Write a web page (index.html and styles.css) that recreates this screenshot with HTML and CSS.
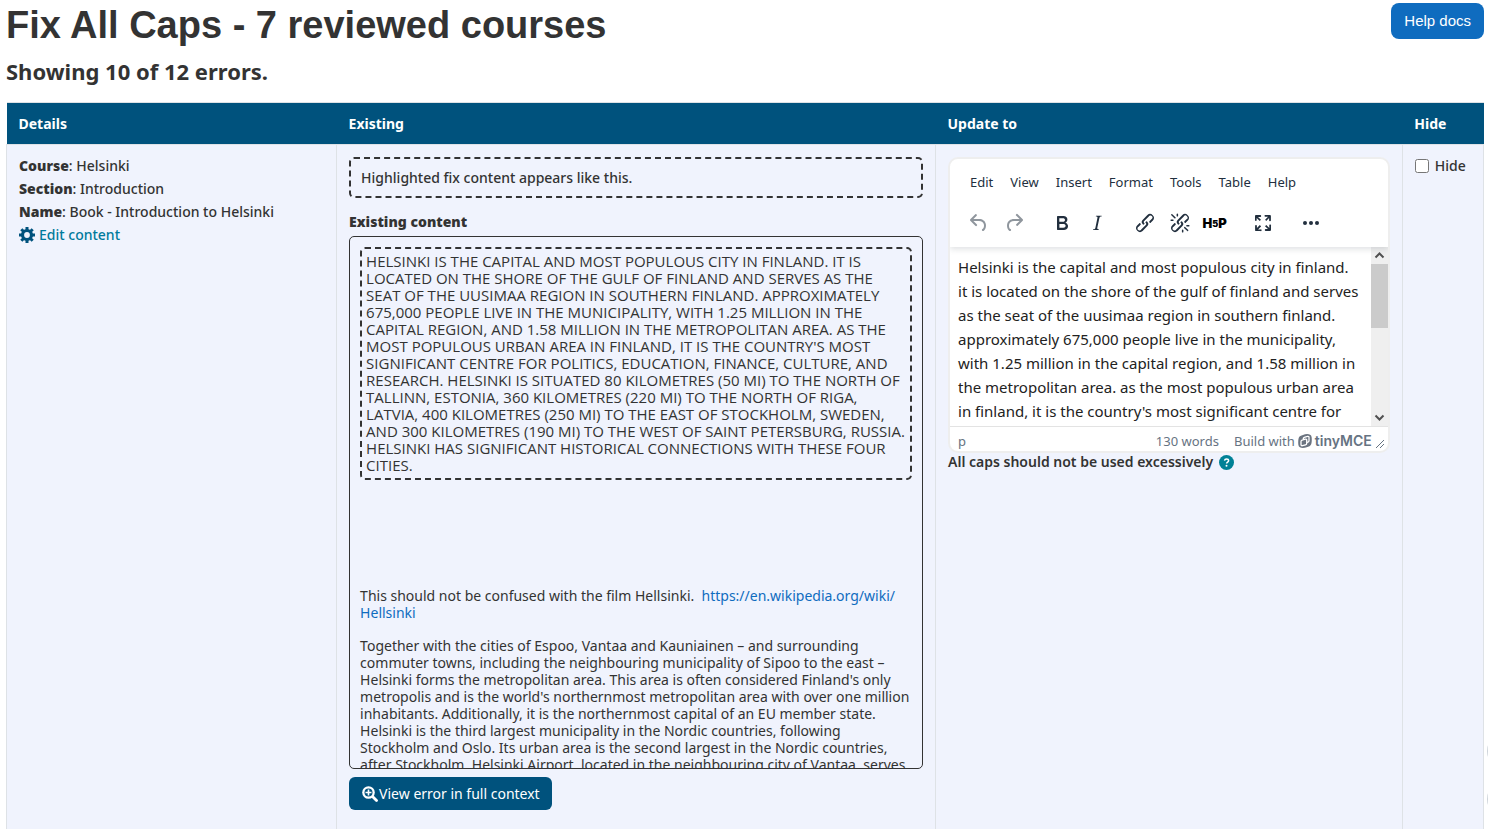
FILE: index.html
```html
<!DOCTYPE html>
<html lang="en">

<head>
  <meta charset="UTF-8">
  <meta name="viewport" content="width=device-width, initial-scale=1.0">
  <title>Fix All Caps</title>
  <link rel="stylesheet" href="styles.css">
</head>

<body>
  <header class="page-header">
    <h1>Fix All Caps - 7 reviewed courses</h1>
    <a href="#" class="btn-help">Help docs</a>
  </header>
  <h2>Showing 10 of 12 errors.</h2>

  <table class="errors">
    <colgroup>
      <col class="col-details">
      <col class="col-existing">
      <col class="col-update">
      <col class="col-hide">
    </colgroup>
    <thead>
      <tr>
        <th>Details</th>
        <th>Existing</th>
        <th>Update to</th>
        <th>Hide</th>
      </tr>
    </thead>
    <tbody>
      <tr>
        <td class="details">
          <div><strong>Course</strong>: Helsinki</div>
          <div><strong>Section</strong>: Introduction</div>
          <div><strong>Name</strong>: Book - Introduction to Helsinki</div>
          <a href="#" class="edit-link">
            <svg width="16" height="16" viewBox="0 0 16 16">
              <circle cx="8" cy="8" r="4.500" fill="none" stroke="#00527d" stroke-width="3.200" />
              <path d="M8 0v4M8 12v4M0 8h4M12 8h4M2.300 2.300l3 3M10.700 10.700l3 3M13.700 2.300l-3 3M5.300 10.700l-3 3" fill="none" stroke="#00527d" stroke-width="3" />
            </svg>
            <span>Edit content</span>
          </a>
        </td>
        <td>
          <div class="sample">Highlighted fix content appears like this.</div>
          <h3>Existing content</h3>
          <div class="existing">
            <p class="highlight">HELSINKI IS THE CAPITAL AND MOST POPULOUS CITY IN FINLAND. IT IS<br>
              LOCATED ON THE SHORE OF THE GULF OF FINLAND AND SERVES AS THE<br>
              SEAT OF THE UUSIMAA REGION IN SOUTHERN FINLAND. APPROXIMATELY<br>
              675,000 PEOPLE LIVE IN THE MUNICIPALITY, WITH 1.25 MILLION IN THE<br>
              CAPITAL REGION, AND 1.58 MILLION IN THE METROPOLITAN AREA. AS THE<br>
              MOST POPULOUS URBAN AREA IN FINLAND, IT IS THE COUNTRY'S MOST<br>
              SIGNIFICANT CENTRE FOR POLITICS, EDUCATION, FINANCE, CULTURE, AND<br>
              RESEARCH. HELSINKI IS SITUATED 80 KILOMETRES (50 MI) TO THE NORTH OF<br>
              TALLINN, ESTONIA, 360 KILOMETRES (220 MI) TO THE NORTH OF RIGA,<br>
              LATVIA, 400 KILOMETRES (250 MI) TO THE EAST OF STOCKHOLM, SWEDEN,<br>
              AND 300 KILOMETRES (190 MI) TO THE WEST OF SAINT PETERSBURG, RUSSIA.<br>
              HELSINKI HAS SIGNIFICANT HISTORICAL CONNECTIONS WITH THESE FOUR<br>
              CITIES.</p>
            <p>This should not be confused with the film Hellsinki.&nbsp; <a href="#">https://en.wikipedia.org/wiki/<br>Hellsinki</a></p>
            <p>Together with the cities of Espoo, Vantaa and Kauniainen – and surrounding<br>
              commuter towns, including the neighbouring municipality of Sipoo to the east –<br>
              Helsinki forms the metropolitan area. This area is often considered Finland's only<br>
              metropolis and is the world's northernmost metropolitan area with over one million<br>
              inhabitants. Additionally, it is the northernmost capital of an EU member state.<br>
              Helsinki is the third largest municipality in the Nordic countries, following<br>
              Stockholm and Oslo. Its urban area is the second largest in the Nordic countries,<br>
              after Stockholm. Helsinki Airport, located in the neighbouring city of Vantaa, serves</p>
          </div>
          <button type="button" class="btn-context">
            <svg width="16" height="16" viewBox="0 0 16 16">
              <circle cx="6.500" cy="6.500" r="6.300" fill="#fff" />
              <path d="M10.500 10.500L14.500 14.500" fill="none" stroke="#fff" stroke-width="2.800" stroke-linecap="round" />
              <circle cx="6.500" cy="6.500" r="4" fill="#00527d" />
              <path d="M6.500 3.500v6M3.500 6.500h6" fill="none" stroke="#fff" stroke-width="1.600" />
            </svg>
            <span>View error in full context</span>
          </button>
        </td>
        <td>
          <div class="editor">
            <div class="editor-head">
              <div class="menubar">
                <button type="button">Edit</button>
                <button type="button">View</button>
                <button type="button">Insert</button>
                <button type="button">Format</button>
                <button type="button">Tools</button>
                <button type="button">Table</button>
                <button type="button">Help</button>
              </div>
              <div class="toolbar">
                <div class="group">
                  <button type="button" aria-label="Undo" disabled>
                    <svg width="24" height="24" viewBox="0 0 24 24">
                      <path d="M6.4 8H12c3.7 0 6.2 2 6.8 5.1.6 2.7-.4 5.6-2.3 6.8a1 1 0 0 1-1-1.8c1.1-.6 1.8-2.7 1.4-4.6-.5-2.1-2.1-3.5-4.9-3.5H6.4l3.3 3.3a1 1 0 1 1-1.4 1.4l-5-5a1 1 0 0 1 0-1.4l5-5a1 1 0 0 1 1.4 1.4L6.4 8Z" />
                    </svg>
                  </button>
                  <button type="button" aria-label="Redo" disabled>
                    <svg width="24" height="24" viewBox="0 0 24 24">
                      <path d="M17.6 10H12c-2.8 0-4.4 1.4-4.9 3.5-.4 2 .3 4 1.4 4.6a1 1 0 1 1-1 1.8c-2-1.2-2.9-4.1-2.3-6.8.6-3 3-5.1 6.8-5.1h5.6l-3.3-3.3a1 1 0 1 1 1.4-1.4l5 5a1 1 0 0 1 0 1.4l-5 5a1 1 0 0 1-1.4-1.4l3.3-3.3Z" />
                    </svg>
                  </button>
                </div>
                <div class="group">
                  <button type="button" aria-label="Bold">
                    <svg width="24" height="24" viewBox="0 0 24 24">
                      <path fill-rule="evenodd" d="M7.8 19c-.3 0-.5 0-.6-.2l-.2-.5V5.7c0-.2 0-.4.2-.5l.6-.2h5c1.5 0 2.7.3 3.5 1 .7.6 1.1 1.4 1.1 2.5a3 3 0 0 1-.6 1.9c-.4.6-1 1-1.6 1.2.4.1.9.3 1.3.6s.8.7 1 1.2c.4.4.5 1 .5 1.6 0 1.3-.4 2.3-1.3 3-.8.7-2.1 1-3.8 1H7.8Zm5-8.3c.6 0 1.2-.1 1.6-.5.4-.3.6-.7.6-1.3 0-1.1-.8-1.7-2.3-1.7H9.3v3.5h3.4Zm.5 6c.7 0 1.3-.1 1.7-.4.4-.4.6-.9.6-1.5s-.2-1-.7-1.4c-.4-.3-1-.4-2-.4H9.4v3.8h4Z" />
                    </svg>
                  </button>
                  <button type="button" aria-label="Italic">
                    <svg width="24" height="24" viewBox="0 0 24 24">
                      <path d="m16.7 4.7-.1.9h-.3c-.6 0-1 0-1.4.3-.3.3-.4.6-.5 1.1l-2.1 9.8v.6c0 .5.4.8 1.4.8h.2l-.2.8H8l.2-.8h.2c1.1 0 1.8-.5 2-1.5l2-9.8.1-.5c0-.6-.4-.8-1.4-.8h-.3l.2-.9h5.8Z" />
                    </svg>
                  </button>
                </div>
                <div class="group">
                  <button type="button" aria-label="Link">
                    <svg width="24" height="24" viewBox="0 0 24 24">
                      <path d="M6.2 12.3a1 1 0 0 1 1.4 1.4l-2 2a2 2 0 1 0 2.6 2.8l4.8-4.8a1 1 0 0 0 0-1.4 1 1 0 1 1 1.4-1.3 2.9 2.9 0 0 1 0 4L9.6 20a3.9 3.9 0 0 1-5.5-5.5l2-2Zm11.6-.6a1 1 0 0 1-1.4-1.4l2-2a2 2 0 1 0-2.6-2.8L11 10.3a1 1 0 0 0 0 1.4A1 1 0 1 1 9.6 13a2.9 2.9 0 0 1 0-4L14.4 4a3.9 3.9 0 0 1 5.5 5.5l-2 2Z" />
                    </svg>
                  </button>
                  <button type="button" aria-label="Remove link">
                    <svg width="24" height="24" viewBox="0 0 24 24">
                      <path d="M6.2 12.3a1 1 0 0 1 1.4 1.4l-2 2a2 2 0 1 0 2.6 2.8l4.8-4.8a1 1 0 0 0 0-1.4 1 1 0 1 1 1.4-1.3 2.9 2.9 0 0 1 0 4L9.6 20a3.9 3.9 0 0 1-5.5-5.5l2-2Zm11.6-.6a1 1 0 0 1-1.4-1.4l2.1-2a2 2 0 1 0-2.7-2.8L11 10.3a1 1 0 0 0 0 1.4A1 1 0 1 1 9.6 13a2.9 2.9 0 0 1 0-4L14.4 4a3.9 3.9 0 0 1 5.5 5.5l-2 2ZM7.6 6.3a.8.8 0 0 1-1 1.1L3.3 4.2a.7.7 0 1 1 1-1l3.2 3.1ZM5.1 8.6a.8.8 0 0 1 0 1.5H3a.8.8 0 0 1 0-1.5H5Zm5-3.5a.8.8 0 0 1-1.5 0V3a.8.8 0 0 1 1.5 0V5Zm6 11.8a.8.8 0 0 1 1-1l3.2 3.2a.8.8 0 0 1-1 1L16 17Zm-2.2 2a.8.8 0 0 1 1.5 0V21a.8.8 0 0 1-1.5 0V19Zm5-3.5a.7.7 0 1 1 0-1.5H21a.8.8 0 0 1 0 1.5H19Z" />
                    </svg>
                  </button>
                  <button type="button" class="h5p">H<small>5</small>P</button>
                </div>
                <div class="group">
                  <button type="button" aria-label="Fullscreen">
                    <svg width="24" height="24" viewBox="0 0 24 24">
                      <path d="m15.3 10-1.2-1.3 2.9-3h-2.3a.9.9 0 1 1 0-1.7H19c.5 0 .9.4.9.9v4.4a.9.9 0 1 1-1.8 0V7l-2.9 3Zm0 4 3 3v-2.3a.9.9 0 1 1 1.7 0V19c0 .5-.4.9-.9.9h-4.4a.9.9 0 1 1 0-1.8H17l-3-2.9 1.3-1.2ZM10 15.4l-2.9 3h2.3a.9.9 0 1 1 0 1.7H5a.9.9 0 0 1-.9-.9v-4.4a.9.9 0 1 1 1.8 0V17l2.9-3 1.2 1.3ZM8.7 10 5.7 7v2.3a.9.9 0 0 1-1.7 0V5c0-.5.4-.9.9-.9h4.4a.9.9 0 0 1 0 1.8H7l3 2.9-1.3 1.2Z" />
                    </svg>
                  </button>
                </div>
                <div class="group">
                  <button type="button" aria-label="More">
                    <svg width="24" height="24" viewBox="0 0 24 24">
                      <circle cx="6" cy="12" r="2" />
                      <circle cx="12" cy="12" r="2" />
                      <circle cx="18" cy="12" r="2" />
                    </svg>
                  </button>
                </div>
              </div>
            </div>
            <div class="editor-body">
              <div class="editor-text" role="textbox" aria-label="Update to" contenteditable="true">Helsinki is the capital and most populous city in finland.<br>
                it is located on the shore of the gulf of finland and serves<br>
                as the seat of the uusimaa region in southern finland.<br>
                approximately 675,000 people live in the municipality,<br>
                with 1.25 million in the capital region, and 1.58 million in<br>
                the metropolitan area. as the most populous urban area<br>
                in finland, it is the country's most significant centre for</div>
              <div class="scrollbar">
                <svg width="17" height="17" viewBox="0 0 17 17"><path d="M4.5 10.5l4-4 4 4" /></svg>
                <div class="thumb"></div>
                <svg width="17" height="17" viewBox="0 0 17 17"><path d="M4.5 6.5l4 4 4-4" /></svg>
              </div>
            </div>
            <div class="statusbar">
              <span class="path">p</span>
              <span>130 words</span>
              <a href="#" class="branding">Build with
                <svg width="14" height="14" viewBox="0 0 14 14">
                  <path fill="#6b7480" d="M5 1C8-.3 13-.6 13.600 3c.3 2 .3 5-.3 7-.7 2.200-2.600 2.500-4.600 3.200C5.500 14.500 1 14.500.4 11 .1 9 .1 6 .700 4 1.300 2.200 3 1.700 5 1Z" />
                  <path fill="none" stroke="#fff" stroke-width="1.300" d="M5.300 5.400V4.600q0-1 1-1.300l3.200-.9q1.500-.3 1.500 1.100v3.200q0 1.100-1.100 1.500l-.9.300M3 7.600q0-1.200 1.100-1.500l3.100-.9q1.500-.3 1.500 1.100v3.100q0 1.100-1.100 1.400l-3.100.9q-1.500.3-1.500-1.100z" />
                </svg>
                <b>tinyMCE</b>
              </a>
              <svg class="resize" width="10" height="10" viewBox="0 0 10 10">
                <path d="M1 9l8-8M5 9l4-4" />
              </svg>
            </div>
          </div>
          <div class="rule">
            <span>All caps should not be used excessively</span>
            <button type="button" aria-label="Help">
              <svg width="15" height="15" viewBox="0 0 15 15">
                <circle cx="7.5" cy="7.5" r="7.5" fill="#008196" />
                <path d="M5.500 5.700c.2-1.100 1-1.700 2-1.700 1.200 0 2.100.7 2.100 1.700 0 1.400-2 1.400-2 2.800" fill="none" stroke="#fff" stroke-width="1.500" />
                <circle cx="7.500" cy="10.700" r="1" fill="#fff" />
              </svg>
            </button>
          </div>
        </td>
        <td>
          <label class="hide"><input type="checkbox"> Hide</label>
        </td>
      </tr>
    </tbody>
  </table>

  <div class="side-buttons">
    <button type="button" aria-label="Help"></button>
    <button type="button" aria-label="Back to top"></button>
  </div>
</body>

</html>
```

FILE: styles.css
```css
* {
  box-sizing: border-box;
}

html {
  height: 100%;
  overflow: hidden;
}

body {
  display: flex;
  flex-direction: column;
  height: 100%;
  margin: 0;
  padding: 0 4px 0 6px;
  overflow: hidden;
  background-color: #fff;
  color: #333;
  font-family: 'Segoe UI', 'Noto Sans', sans-serif;
  font-size: 14px;
  line-height: 23px;
}

button {
  padding: 0;
  border: none;
  background: none;
  color: inherit;
  font: inherit;
  cursor: pointer;
}

a {
  color: #0f6cbf;
  text-decoration: none;
}

h1,
h2,
h3,
p {
  margin: 0;
}

.page-header {
  display: flex;
  justify-content: space-between;
  align-items: flex-start;
  height: 50px;
}

h1 {
  font-family: 'Liberation Sans', Arial, sans-serif;
  font-size: 38px;
  line-height: 50px;
}

h2 {
  margin: 5px 0 15px;
  font-size: 22px;
  line-height: 32px;
}

.btn-help {
  margin-top: 3px;
  padding: 6px 13px;
  border-radius: 8px;
  background-color: #0f6cbf;
  color: #fff;
  font-family: 'Liberation Sans', Arial, sans-serif;
  font-size: 15px;
  line-height: 24px;
}

/* errors table */
.errors {
  flex: none;
  width: 100%;
  min-height: 800px;
  border-collapse: collapse;
  table-layout: fixed;
}

.col-details {
  width: 22.35%;
}

.col-existing {
  width: 40.55%;
}

.col-update {
  width: 31.6%;
}

.errors th,
.errors td {
  padding: 9px 12px;
  border: 1px solid #dee2e6;
  text-align: left;
  vertical-align: top;
}

.errors th {
  border-width: 1px 0;
  background-color: #00527d;
  color: #fff;
}

.errors td {
  background-color: #f0f3fd;
}

strong {
  font-weight: 900;
}

.details,
.sample,
.hide {
  font-weight: 500;
}

.edit-link {
  display: flex;
  align-items: center;
  gap: 4px;
  color: #007a9c;
}

.sample {
  margin-top: 3px;
  padding: 7px 10px;
  border: 2px dashed #333;
  border-radius: 5px;
}

h3 {
  margin: 12px 0 3px;
  font-size: 14px;
  font-weight: 900;
  line-height: 23px;
}

.existing {
  height: 533px;
  padding: 10px;
  overflow: hidden;
  border: 1px solid #333;
  border-radius: 5px;
  line-height: 17px;
  white-space: nowrap;
}

.existing p {
  margin-bottom: 16px;
}

.existing .highlight {
  margin-bottom: 107px;
  padding: 4px;
  border: 2px dashed #333;
  border-radius: 5px;
  font-family: 'Segoe UI', 'Open Sans', sans-serif;
  font-size: 15px;
}

.btn-context {
  display: flex;
  align-items: center;
  gap: 1px;
  margin-top: 8px;
  padding: 5px 12px 5px 13px;
  border-radius: 6px;
  background-color: #00527d;
  color: #fff;
}

/* editor */
.editor {
  margin-top: 3px;
  border: 2px solid #eee;
  border-radius: 10px;
  background-color: #fff;
  overflow: hidden;
}

.editor-head {
  position: relative;
  padding: 0 11px;
  color: #222f3e;
  box-shadow: 0 2px 6px rgba(34, 47, 62, .15);
}

.menubar {
  display: flex;
  gap: 17px;
  padding: 9px 9px 10px;
  font-size: 13px;
  line-height: 28px;
}

.toolbar {
  display: flex;
  gap: 13px;
  height: 41px;
}

.toolbar svg {
  display: block;
  fill: #222f3e;
}

.toolbar button {
  display: flex;
  justify-content: center;
  align-items: center;
  width: 35px;
  height: 34px;
}

.toolbar button:disabled svg {
  opacity: .5;
}

.group {
  display: flex;
}

.toolbar .h5p {
  color: #000;
  font-family: Inter, sans-serif;
  font-size: 13px;
  font-weight: 900;
}

.h5p small {
  font-size: 9px;
}

.editor-body {
  display: flex;
  height: 179px;
}

.editor-text {
  flex: 1;
  padding: 8px;
  overflow: hidden;
  color: #222;
  font-size: 15px;
  line-height: 24px;
  white-space: nowrap;
}

.scrollbar {
  display: flex;
  flex-direction: column;
  width: 17px;
  background-color: #efefef;
}

.scrollbar svg {
  flex: none;
  fill: none;
  stroke: #505050;
  stroke-width: 2;
}

.scrollbar .thumb {
  height: 64px;
  margin-bottom: auto;
  background-color: #cbcbcb;
}

.statusbar {
  display: flex;
  align-items: flex-end;
  gap: 15px;
  height: 25px;
  padding: 0 3px 0 8px;
  border-top: 1px solid #e3e3e3;
  color: #667382;
  font-size: 13px;
  line-height: 20px;
}

.path {
  margin-right: auto;
}

.branding {
  display: flex;
  align-items: center;
  gap: 3px;
  color: inherit;
}

.branding b {
  font-family: Inter, sans-serif;
  font-size: 14px;
  font-weight: 600;
}

.resize {
  margin: 0 0 2px -12px;
  stroke: #667382;
}

.rule {
  display: flex;
  align-items: center;
  gap: 6px;
  line-height: 18px;
  font-weight: 600;
}

.rule button,
.rule svg {
  display: block;
}

.hide {
  display: flex;
  align-items: center;
  gap: 6px;
}

.hide input {
  width: 14px;
  height: 14px;
  margin: 0;
}

/* round buttons that peek in from the right edge */
.side-buttons {
  position: fixed;
  right: -35px;
  bottom: 12px;
  display: flex;
  flex-direction: column;
  gap: 12px;
}

.side-buttons button {
  width: 36px;
  height: 36px;
  border-radius: 50%;
  background-color: #ced4da;
}
```
